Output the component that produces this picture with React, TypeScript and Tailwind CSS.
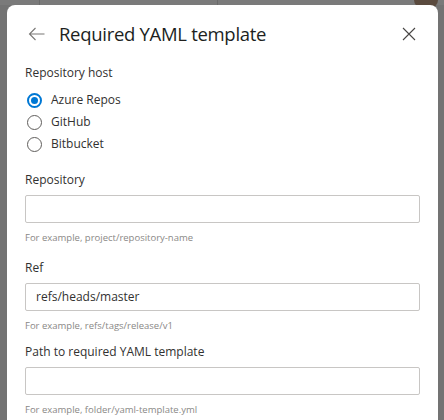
import React, { useState } from "react";

const hosts = ["Azure Repos", "GitHub", "Bitbucket"];

const Field = ({
  label,
  value,
  hint,
  className,
}: {
  label: string;
  value?: string;
  hint: string;
  className?: string;
}) => {
  return (
    <div className={className}>
      <p className="text-[12px] leading-[20px] text-[#323130]">{label}</p>
      <div className="mt-[5px] h-[28px] w-full border border-[#c8c6c4] rounded-[2px] flex items-center px-[10px] text-[12px] text-[#323130]">
        {value}
      </div>
      <p className="mt-[7px] text-[9.5px] leading-[16px] text-[#8a8886]">{hint}</p>
    </div>
  );
};

const App = () => {
  const [host, setHost] = useState("Azure Repos");
  return (
    <div
      className="relative w-[444px] h-[420px] overflow-hidden bg-[#737373]"
      style={{ fontFamily: "'Open Sans', 'Noto Sans', sans-serif" }}
    >
      {/* backdrop strip at the top */}
      <div className="absolute top-0 left-0 right-0 h-[5px] bg-[#7a7a7a] flex">
        <div className="w-[40px] border-r border-[#6a6a6a]" />
        <div className="w-[178px] border-r border-[#6a6a6a]" />
      </div>
      <div className="absolute top-0 right-[6px] w-[24px] h-[8px] rounded-b-full bg-[#5a4a3e]" />

      <div className="relative ml-[7px] mt-[5px] w-[431px] h-[430px] bg-white rounded-[8px]">
        {/* header */}
        <div className="h-[58px] flex items-center pl-[21px] pr-[22px]">
          <svg width="17" height="14" viewBox="0 0 17 14" className="text-[#797775]">
            <path d="M7.5 1L1.5 7l6 6M1.5 7h15" fill="none" stroke="currentColor" strokeWidth="1.1" />
          </svg>
          <h1 className="ml-[14px] text-[18.5px] font-medium tracking-[-0.3px] text-[#201f1e]">
            Required YAML template
          </h1>
          <svg width="14" height="14" viewBox="0 0 14 14" className="ml-auto text-[#484644]">
            <path d="M1 1l12 12M13 1L1 13" fill="none" stroke="currentColor" strokeWidth="1.1" />
          </svg>
        </div>

        <div className="px-[18px]">
          <p className="text-[12px] leading-[20px] text-[#323130]">Repository host</p>
          <div className="mt-[6px] flex flex-col">
            {hosts.map((h) => (
              <div
                key={h}
                onClick={() => setHost(h)}
                className="h-[22px] flex items-center cursor-pointer"
              >
                <div
                  className={`ml-[2px] w-[15px] h-[15px] rounded-full border flex items-center justify-center ${
                    host === h ? "border-[#0078d4] border-[2px]" : "border-[#605e5c]"
                  }`}
                >
                  {host === h && <div className="w-[7px] h-[7px] rounded-full bg-[#0078d4]" />}
                </div>
                <span className="ml-[9px] text-[12px] text-[#323130]">{h}</span>
              </div>
            ))}
          </div>

          <Field className="mt-[15px]" label="Repository" hint="For example, project/repository-name" />
          <Field
            className="mt-[12px]"
            label="Ref"
            value="refs/heads/master"
            hint="For example, refs/tags/release/v1"
          />
          <Field
            className="mt-[8px]"
            label="Path to required YAML template"
            hint="For example, folder/yaml-template.yml"
          />
        </div>
      </div>
    </div>
  );
};

export default App;
